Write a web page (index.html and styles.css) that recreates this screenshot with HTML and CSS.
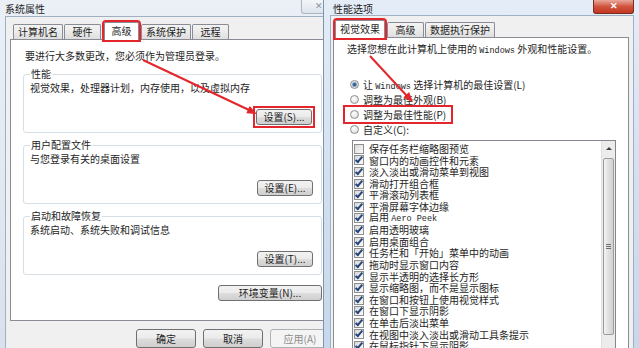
FILE: index.html
```html
<!DOCTYPE html>
<html lang="zh-CN">
<head>
  <meta charset="UTF-8">
  <title>系统属性 - 性能选项</title>
  <link rel="stylesheet" href="styles.css">
</head>
<body>
  <div class="desktop">
    <div class="window sys">
      <div class="titlebar">
        <span class="title">系统属性</span>
        <span class="close inactive">✕</span>
      </div>
      <div class="client">
        <div class="tabs">
          <div class="tab">计算机名</div>
          <div class="tab">硬件</div>
          <div class="tab active marked">高级</div>
          <div class="tab">系统保护</div>
          <div class="tab">远程</div>
        </div>
        <div class="panel">
          <p class="intro">要进行大多数更改，您必须作为管理员登录。</p>

          <fieldset class="group">
            <legend>性能</legend>
            <p>视觉效果，处理器计划，内存使用，以及虚拟内存</p>
            <div class="actions"><span class="marker"><button class="btn">设置(S)...</button></span></div>
          </fieldset>

          <fieldset class="group">
            <legend>用户配置文件</legend>
            <p>与您登录有关的桌面设置</p>
            <div class="actions"><button class="btn">设置(E)...</button></div>
          </fieldset>

          <fieldset class="group">
            <legend>启动和故障恢复</legend>
            <p>系统启动、系统失败和调试信息</p>
            <div class="actions"><button class="btn">设置(T)...</button></div>
          </fieldset>

          <div class="actions env"><button class="btn wide">环境变量(N)...</button></div>
        </div>
        <div class="footer">
          <button class="btn big">确定</button>
          <button class="btn big">取消</button>
          <button class="btn big" disabled>应用(A)</button>
        </div>
      </div>
    </div>

    <div class="window perf">
      <div class="titlebar">
        <span class="title">性能选项</span>
        <span class="close active-close">✕</span>
      </div>
      <div class="client">
        <div class="tabs">
          <div class="tab active marked">视觉效果</div>
          <div class="tab">高级</div>
          <div class="tab">数据执行保护</div>
        </div>
        <div class="panel">
          <p class="intro">选择您想在此计算机上使用的 <span class="latin">Windows</span> 外观和性能设置。</p>

          <div class="radios">
            <div class="radio-row"><span class="radio on"></span><span>让 <span class="latin">Windows</span> 选择计算机的最佳设置(L)</span></div>
            <div class="radio-row"><span class="radio"></span><span>调整为最佳外观(B)</span></div>
            <div class="radio-row marked"><span class="radio"></span><span>调整为最佳性能(P)</span></div>
            <div class="radio-row"><span class="radio"></span><span>自定义(C):</span></div>
          </div>

          <div class="listbox">
            <div class="items">
              <div class="item"><span class="cb"></span><span>保存任务栏缩略图预览</span></div>
              <div class="item"><span class="cb on"></span><span>窗口内的动画控件和元素</span></div>
              <div class="item"><span class="cb on"></span><span>淡入淡出或滑动菜单到视图</span></div>
              <div class="item"><span class="cb on"></span><span>滑动打开组合框</span></div>
              <div class="item"><span class="cb on"></span><span>平滑滚动列表框</span></div>
              <div class="item"><span class="cb on"></span><span>平滑屏幕字体边缘</span></div>
              <div class="item"><span class="cb on"></span><span>启用 <span class="latin">Aero Peek</span></span></div>
              <div class="item"><span class="cb on"></span><span>启用透明玻璃</span></div>
              <div class="item"><span class="cb on"></span><span>启用桌面组合</span></div>
              <div class="item"><span class="cb on"></span><span>任务栏和「开始」菜单中的动画</span></div>
              <div class="item"><span class="cb on"></span><span>拖动时显示窗口内容</span></div>
              <div class="item"><span class="cb on"></span><span>显示半透明的选择长方形</span></div>
              <div class="item"><span class="cb on"></span><span>显示缩略图，而不是显示图标</span></div>
              <div class="item"><span class="cb on"></span><span>在窗口和按钮上使用视觉样式</span></div>
              <div class="item"><span class="cb on"></span><span>在窗口下显示阴影</span></div>
              <div class="item"><span class="cb on"></span><span>在单击后淡出菜单</span></div>
              <div class="item"><span class="cb on"></span><span>在视图中淡入淡出或滑动工具条提示</span></div>
              <div class="item"><span class="cb on"></span><span>在鼠标指针下显示阴影</span></div>
            </div>
            <div class="scrollbar">
              <div class="sb-up"></div>
              <div class="sb-thumb"><span class="grip"></span></div>
            </div>
          </div>
        </div>
      </div>
    </div>

    <!-- red annotation arrows -->
    <svg class="arrows" width="639" height="348" viewBox="0 0 639 348">
      <line x1="143" y1="60" x2="249" y2="110" />
      <polygon points="257,114 246.3,113.3 249.7,106.1" />
      <line x1="370" y1="56" x2="407" y2="96" />
      <polygon points="413,102 403.3,97.4 409.1,92" />
    </svg>
  </div>
</body>
</html>
```

FILE: styles.css
```css
body {
  margin: 0;
  font-family: "Noto Sans CJK SC", "Noto Sans", sans-serif;
  font-size: 10px;
  color: #1e1e1e;
}
p {
  margin: 0;
  line-height: 12px;
}
.latin {
  font-family: "Liberation Mono", monospace;
  font-size: 8.5px;
}
.desktop {
  position: relative;
  display: flex;
  width: 639px;
  height: 348px;
  overflow: hidden;
  background: #dfe7ef;
}
.window {
  flex: none;
  display: flex;
  flex-direction: column;
}
.sys {
  width: 336px;
  background: linear-gradient(#eaf0f6, #dfe7f0 60%, #d9e2ec);
}
.perf {
  width: 316px;
  margin-left: -13px;
  position: relative;
  z-index: 1;
  border-left: 1px solid #8093a8;
  background: linear-gradient(#e4edf7, #d2e1f1 50%, #c6d8ec);
}
.titlebar {
  height: 20px;
  display: flex;
  justify-content: space-between;
  align-items: flex-start;
}
.sys .titlebar {
  padding-left: 5px;
}
.perf .titlebar {
  padding-left: 9px;
  padding-right: 6px;
}
.title {
  padding-top: 3px;
  line-height: 12px;
}
.close {
  height: 13px;
  line-height: 12px;
  text-align: center;
  border-radius: 0 0 3px 3px;
  font-size: 9px;
}
.close.inactive {
  width: 33px;
  border: 1px solid #a9b5c3;
  border-top: none;
  background: linear-gradient(#f3f6f9, #dde4ec);
  color: #8a96a4;
}
.close.active-close {
  width: 39px;
  border: 1px solid #7a2b22;
  border-top: none;
  background: linear-gradient(#e9a99a, #d0553f 50%, #c4361f);
  color: #fff;
  font-weight: bold;
}
.client {
  flex: 1;
  background: #f0f0f0;
  border: 1px solid #9fb0c3;
  border-bottom: none;
}
.sys .client {
  margin: 0 5px;
  padding: 5px 0 0 4px;
}
.perf .client {
  margin: 0 6px 0 6px;
  padding: 4px 4px 0 2px;
}
.tabs {
  display: flex;
  align-items: flex-end;
  margin-bottom: -1px;
  position: relative;
  z-index: 1;
}
.sys .tabs {
  padding-left: 3px;
}
.tab {
  height: 14px;
  line-height: 14px;
  min-width: 27px;
  padding: 0 4px;
  margin: 0 1px 1px 0;
  text-align: center;
  border: 1px solid #898c95;
  border-bottom: none;
  border-radius: 2px 2px 0 0;
  background: linear-gradient(#f3f3f3, #ebebeb 50%, #dedede);
}
.tab.active {
  height: 17px;
  line-height: 15px;
  min-width: 25px;
  margin: 0 2px;
  background: #fff;
}
.marked {
  outline: 2px solid #e3262c;
}
.marker {
  display: flex;
  padding: 1px;
  outline: 2px solid #e3262c;
}
.panel {
  background: #fff;
  border: 1px solid #898c95;
}
.sys .panel {
  height: 282px;
  box-sizing: border-box;
  padding: 10px 7px 0 12px;
}
.sys .intro {
  padding-left: 2px;
}
.group {
  margin: 6px 0 0;
  padding: 0 8px 7px 6px;
  border: 1px solid #d5dfe5;
  border-radius: 3px;
}
.group legend {
  padding: 0 1px;
  line-height: 12px;
}
.group p {
  margin-top: 2px;
}
.actions {
  display: flex;
  justify-content: flex-end;
  margin-top: 15px;
}
.group .actions:has(.marker) {
  margin-top: 14px;
  margin-bottom: -1px;
}
.actions.env {
  margin-top: 10px;
}
.btn {
  font: inherit;
  height: 16px;
  min-width: 56px;
  padding: 0 5px;
  line-height: 14px;
  color: #1e1e1e;
  border: 1px solid #707070;
  border-radius: 3px;
  background: linear-gradient(#f2f2f2, #ebebeb 48%, #dddddd 52%, #cfcfcf);
}
.btn.wide {
  min-width: 104px;
}
.btn.big {
  width: 60px;
  height: 19px;
}
.btn:disabled {
  color: #8d8d8d;
  border-color: #adb2b5;
  background: #f4f4f4;
}
.footer {
  display: flex;
  justify-content: flex-end;
  gap: 7px;
  padding-top: 8px;
}
.perf .panel {
  height: 320px;
  padding: 5px 4px 0 13px;
}
.radios {
  margin-top: 20px;
  padding-left: 3px;
}
.radio-row {
  display: flex;
  align-items: center;
  height: 15px;
  width: max-content;
  white-space: pre;
}
.radio-row.marked {
  padding: 0 5px;
  margin-left: -5px;
  outline-offset: 0;
}
.radio {
  flex: none;
  width: 7px;
  height: 7px;
  margin-right: 4px;
  border: 1px solid #8e8f8f;
  border-radius: 50%;
  background: radial-gradient(circle at 40% 35%, #ffffff, #d6d6d6);
  display: flex;
  align-items: center;
  justify-content: center;
}
.radio.on::after {
  content: "";
  width: 3px;
  height: 3px;
  border-radius: 50%;
  background: #2f5d8a;
  box-shadow: 0 0 1px 1px #6f97bf;
}
.listbox {
  display: flex;
  width: 262px;
  height: 230px;
  margin: 3px 0 0 5px;
  border: 1px solid #828790;
}
.items {
  flex: 1;
  padding: 2px 0 0 1px;
}
.item {
  display: flex;
  align-items: center;
  height: 11.6px;
  line-height: 11.6px;
  white-space: pre;
}
.cb {
  flex: none;
  position: relative;
  width: 8px;
  height: 8px;
  margin-right: 5px;
  border: 1px solid #8f8f8f;
  background: linear-gradient(135deg, #d8d8d8, #fbfbfb);
}
.cb.on::after {
  content: "";
  position: absolute;
  left: 2px;
  top: -1px;
  width: 2px;
  height: 6px;
  border: solid #24467c;
  border-width: 0 2px 2px 0;
  transform: rotate(40deg);
}
.scrollbar {
  flex: none;
  width: 13px;
  background: #ececec;
  border-left: 1px solid #e0e0e0;
}
.sb-up {
  height: 15px;
  display: flex;
  align-items: center;
  justify-content: center;
}
.sb-up::after {
  content: "";
  border: 3px solid transparent;
  border-top: none;
  border-bottom: 3px solid #404040;
}
.sb-thumb {
  height: 175px;
  margin: 2px 1px 0 1px;
  border: 1px solid #9b9b9b;
  border-radius: 2px;
  background: linear-gradient(90deg, #f3f3f3, #e0e0e0 50%, #d2d2d2);
  display: flex;
  align-items: center;
  justify-content: center;
}
.grip {
  width: 5px;
  height: 5px;
  background: repeating-linear-gradient(#6d6d6d 0 1px, transparent 1px 2px);
}
.arrows {
  position: absolute;
  left: 0;
  top: 0;
  z-index: 2;
  pointer-events: none;
}
.arrows line {
  stroke: #e3262c;
  stroke-width: 2;
}
.arrows polygon {
  fill: #e3262c;
}
```
